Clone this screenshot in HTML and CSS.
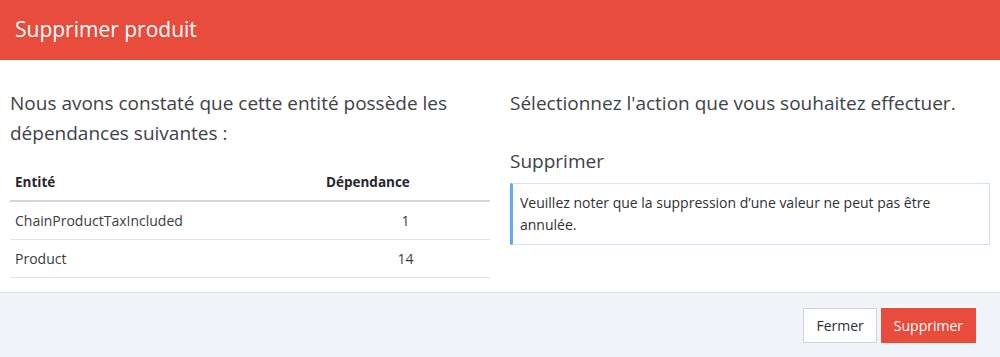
FILE: index.html
```html
<!DOCTYPE html>
<html lang="fr">
<head>
    <meta charset="UTF-8">
    <meta name="viewport" content="width=device-width, initial-scale=1.0">
    <title>Supprimer produit</title>
    <link rel="stylesheet" href="styles.css">
</head>
<body>

    <div class="modal">
        <!-- Header -->
        <div class="modal-header">
            <h3>Supprimer produit</h3>
        </div>

        <!-- Body -->
        <div class="modal-body">
            <div class="col">
                <p class="lead">Nous avons constaté que cette entité possède les dépendances suivantes :</p>
                <table class="deps">
                    <thead>
                        <tr>
                            <th>Entité</th>
                            <th class="num-head">Dépendance</th>
                        </tr>
                    </thead>
                    <tbody>
                        <tr>
                            <td>ChainProductTaxIncluded</td>
                            <td class="num">1</td>
                        </tr>
                        <tr>
                            <td>Product</td>
                            <td class="num">14</td>
                        </tr>
                    </tbody>
                </table>
            </div>

            <div class="col">
                <p class="lead">Sélectionnez l'action que vous souhaitez effectuer.</p>
                <h4 class="action-title">Supprimer</h4>
                <div class="alert">
                    Veuillez noter que la suppression d’une valeur ne peut pas être annulée.
                </div>
            </div>
        </div>

        <!-- Footer -->
        <div class="modal-footer">
            <button class="btn btn-default">Fermer</button>
            <button class="btn btn-danger">Supprimer</button>
        </div>
    </div>

</body>
</html>
```

FILE: styles.css
```css
/* General Styling */
body {
    margin: 0;
    font-family: 'Open Sans', 'Noto Sans', sans-serif;
    color: #363a3f;
    background: #fff;
}

.modal {
    width: 1000px;
    height: 357px;
    display: flex;
    flex-direction: column;
}

/* Header */
.modal-header {
    height: 60px;
    background: #e74c3c;
    display: flex;
    align-items: center;
    padding: 0 15px;
}

.modal-header h3 {
    margin: 0;
    font-size: 21px;
    font-weight: normal;
    color: #fff;
    position: relative;
    top: -1px;
}

/* Body */
.modal-body {
    height: 232px;
    display: flex;
    gap: 20px;
    padding: 0 10px;
}

.col {
    flex: 1;
}

.lead {
    margin: 28px 0 0;
    font-size: 19px;
    line-height: 30px;
    color: #3e4248;
}

/* Dependencies Table */
.deps {
    width: 100%;
    margin-top: 16px;
    border-collapse: collapse;
    font-size: 14px;
}

.deps th {
    text-align: left;
    font-weight: bold;
    font-size: 13.5px;
    color: #25282c;
    height: 36px;
    padding: 0 5px;
    border-bottom: 2px solid #d0d5de;
}

.deps td {
    height: 37px;
    padding: 0 5px;
    border-bottom: 1px solid #e3e3e3;
    color: #3a3d42;
}

.deps .num-head,
.deps .num {
    width: 159px;
}

.deps .num {
    text-align: center;
}

/* Action Side */
.action-title {
    margin: 28px 0 0;
    font-size: 19px;
    font-weight: normal;
    line-height: 30px;
    color: #3e4248;
}

.alert {
    margin-top: 7px;
    padding: 8px 10px 8px 7px;
    font-size: 14px;
    line-height: 22px;
    border: 1px solid #cfe3f8;
    border-left: 3px solid #64a7f6;
    color: #2e3136;
}

/* Footer */
.modal-footer {
    flex: 1;
    background: #f1f5f9;
    border-top: 1px solid #dde2e8;
    display: flex;
    justify-content: flex-end;
    align-items: center;
    gap: 4px;
    padding: 0 24px 0 0;
}

.btn {
    height: 35px;
    padding: 0 12px;
    font-family: inherit;
    font-size: 14px;
    border-radius: 0;
    cursor: pointer;
}

.btn-default {
    background: #fff;
    color: #2a2d32;
    border: 1px solid #ccd3dc;
}

.btn-danger {
    background: #e74c3c;
    color: #fff;
    border: 1px solid #e74c3c;
}
```
